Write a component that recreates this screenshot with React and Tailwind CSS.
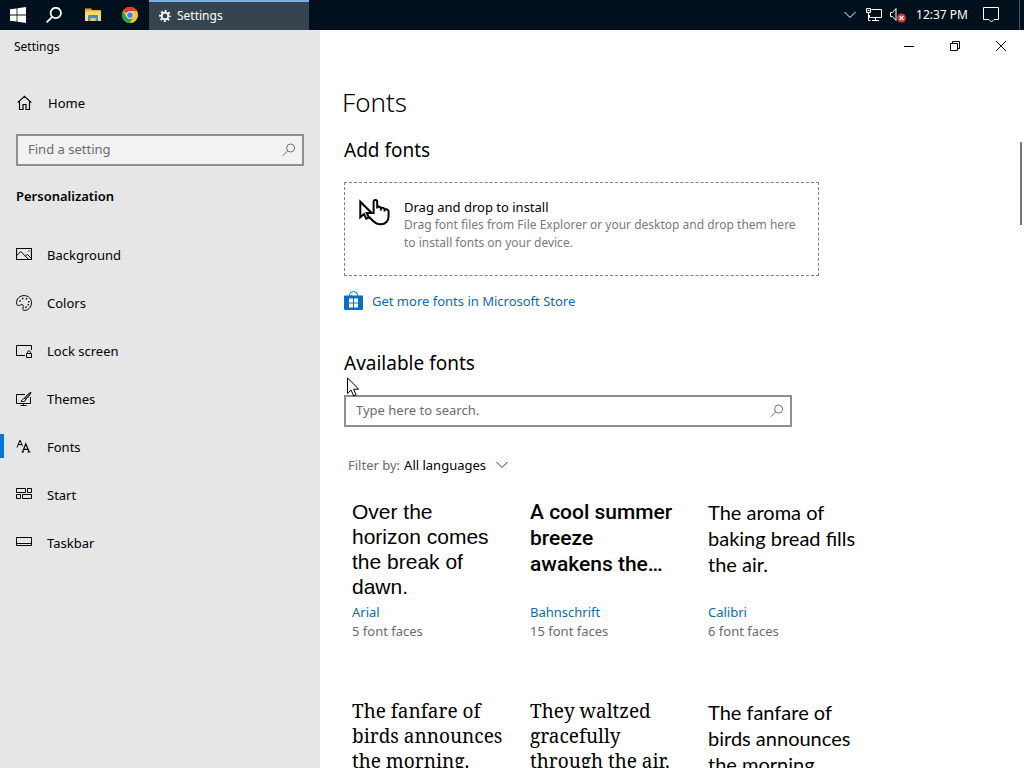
import React, { useState } from 'react';

/* Icons */
const WindowsLogo = () => (
  <svg className="h-4 w-4" viewBox="0 0 16 16" fill="#fff">
    <path d="M0 2.3 6.6 1.4V7.6H0zM7.4 1.3 16 0v7.6H7.4zM0 8.4h6.6v6.2L0 13.7zM7.4 8.4H16V16l-8.6-1.3z" />
  </svg>
);

const TaskbarSearchIcon = () => (
  <svg className="h-4 w-4" viewBox="0 0 16 16" fill="none" stroke="#fff" strokeWidth="1.8">
    <circle cx="9.8" cy="6" r="5.2" />
    <path d="M6.2 9.8.6 15.4" />
  </svg>
);

const ExplorerIcon = () => (
  <svg className="h-4 w-4" viewBox="0 0 16 16">
    <path d="M0 1.5h6l1.2 1.6H16V14H0z" fill="#e8a935" />
    <path d="M0 4.2h16V14H0z" fill="#fbd873" />
    <path d="M3 14V9.2c0-.7.5-1.2 1.2-1.2h7.6c.7 0 1.2.5 1.2 1.2V14h-2.6v-3H5.6v3z" fill="#3f8fc9" />
    <path d="M5.6 11h4.8v3H5.6z" fill="#e9c565" />
  </svg>
);

const ChromeIcon = () => (
  <svg className="h-4 w-4" viewBox="0 0 48 48">
    <circle cx="24" cy="24" r="24" fill="#fbc116" />
    <path d="M24 24 3.2 12A24 24 0 0 1 44.8 12L44.8 13H24z" fill="#e33b2e" />
    <path d="M3.2 12A24 24 0 0 0 24 48L34.4 30 13.6 30z" fill="#2ba24c" />
    <path d="M24 13h20.8A24 24 0 0 1 24 48l10.4-18z" fill="#fbc116" />
    <circle cx="24" cy="24" r="11" fill="#fff" />
    <circle cx="24" cy="24" r="8.6" fill="#3f7fee" />
  </svg>
);

const GearIcon = () => (
  <svg className="h-3 w-3" viewBox="0 0 24 24" fill="none" stroke="#fff">
    <circle cx="12" cy="12" r="6.6" strokeWidth="3.6" />
    <circle
      cx="12"
      cy="12"
      r="9.9"
      strokeWidth="4"
      strokeDasharray="3.9 3.876"
      strokeDashoffset="1.95"
    />
  </svg>
);

const ChevronDown = ({ className }) => (
  <svg className={className} viewBox="0 0 12 8" fill="none" stroke="currentColor">
    <path d="M.5 1 6 6.5 11.5 1" />
  </svg>
);

const NetworkIcon = () => (
  <svg className="h-4 w-4" viewBox="0 0 16 16" fill="none" stroke="#fff">
    <path d="M5.5 2.5h10v8h-12V8M9.5 10.5v3M6 13.5h7" />
    <path d="M.5 1.5h4v4h-4zM2.5 5.5v8h2M1.5 3.5h2" />
  </svg>
);

const MutedIcon = () => (
  <svg className="h-4 w-4" viewBox="0 0 16 16" fill="none" stroke="#fff">
    <path d="M.5 5.5h2l3.5-4v12l-3.5-4h-2z" />
    <circle cx="11.5" cy="11" r="4.5" fill="#d1343f" stroke="none" />
    <path d="m9.5 9 4 4M13.5 9l-4 4" strokeWidth="1.2" />
  </svg>
);

const NotificationIcon = () => (
  <svg className="h-4 w-4" viewBox="0 0 16 16" fill="none" stroke="#fff">
    <path d="M.5.5h15v12H11L8.5 15 6 12.5H.5z" />
  </svg>
);

const SearchIcon = () => (
  <svg className="h-3.5 w-3.5" viewBox="0 0 14 14" fill="none" stroke="#6f6f6f">
    <circle cx="8.6" cy="5" r="4" />
    <path d="M5.7 7.9.8 12.8" />
  </svg>
);

const NavIcon = ({ children }) => (
  <svg className="mb-0.5 h-4 w-4 shrink-0" viewBox="0 0 16 16" fill="none" stroke="#000">
    {children}
  </svg>
);

const HomeIcon = () => (
  <NavIcon>
    <path d="M1.6 7.6 8.5 1.3l6.9 6.3M3.5 6v8.5H7v-5h3v5h3.5V6" strokeWidth="1.2" />
  </NavIcon>
);

const navItems = [
  {
    name: 'Background',
    icon: (
      <NavIcon>
        <path d="M.5 1.5h15v11H.5z" strokeWidth="1.2" />
        <path d="m.8 8.5 4-4 8 8M9.3 9.3l2-2 4 4" />
        <path d="M12.5 4h1.2" />
      </NavIcon>
    ),
  },
  {
    name: 'Colors',
    icon: (
      <NavIcon>
        <path d="M.7 9.3C-.3 3.6 4 .5 8.2.6c4.3 0 7.3 3.2 7.3 7.2 0 4.3-3.2 7.6-6.8 7.6-1.8 0-2.2-1-1.7-2.6.5-1.7.4-3-1-3.3-1.3-.2-1.6.9-2.8 1C1.9 10.6.9 10.2.7 9.3z" />
        <path d="M3.3 6h1.4M6 3.5h1.4M9.8 3.8h1.4M12 6.8h1.4M11.6 9.8H13M9.2 12.2h1.4" strokeWidth="1.4" />
      </NavIcon>
    ),
  },
  {
    name: 'Lock screen',
    icon: (
      <NavIcon>
        <path d="M9 12.5H.5v-10h15V7" />
        <path d="M10.5 10.5h5v4h-5zM11.5 10.5V9.3c0-2 3-2 3 0v1.2" />
      </NavIcon>
    ),
  },
  {
    name: 'Themes',
    icon: (
      <NavIcon>
        <path d="M9 3.5H.5v9h14V6M7.5 12.5v2M4.5 14.5h6" />
        <path d="M15 1.3c-2.5 1.2-5 3.7-6.5 6l1.3 1.2c2-1.7 4.3-4.5 5.2-7.2z" fill="#777" />
        <path d="M8.5 7.5c-2 0-1.8 2-3.7 2.7 1.7.8 4.7.6 4.9-1.7z" />
      </NavIcon>
    ),
  },
  {
    name: 'Fonts',
    icon: (
      <NavIcon>
        <path d="M1 8.5 4 1.2l2.5 6M2.3 5.5h3.4" />
        <path d="M6.5 13 9.8 4.8 13.2 13M7.5 10.3h4.6M5.5 13H8M11.5 13h3" strokeWidth="1.2" />
      </NavIcon>
    ),
  },
  {
    name: 'Start',
    icon: (
      <NavIcon>
        <path d="M.5 1.5h9v4h-9zM11.5 1.5h4v4h-4zM.5 7.5h4v4h-4zM6.5 7.5h9v4h-9z" />
      </NavIcon>
    ),
  },
  {
    name: 'Taskbar',
    icon: (
      <NavIcon>
        <path d="M.5 2.5h15v8H.5zM.5 8.5h15" />
      </NavIcon>
    ),
  },
];

const StoreIcon = () => (
  <svg className="h-5 w-5 shrink-0" viewBox="0 0 20 20" fill="none">
    <path d="M5.5 5V4a4 3.5 0 0 1 8 0v1" stroke="#0a6fbf" />
    <path d="M7.8 5V3.6" stroke="#0a6fbf" />
    <path d="M0 4.5h19v13q0 1.5-1.5 1.5h-16Q0 19 0 17.5z" fill="#0a6fc2" />
    <path d="M5 7.5h4v4H5zM10 7.5h4v4h-4zM5 12.5h4v4H5zM10 12.5h4v4h-4z" fill="#fff" />
  </svg>
);

const DragDropIcon = () => (
  <svg className="h-8 w-8 shrink-0" viewBox="0 0 32 32" fill="none" stroke="#000" strokeWidth="2">
    <path
      d="M14.6 16V4c0-2.7 3.6-2.7 3.6 0v6.5M18.2 9.3c1-1.2 3.7-.7 3.7 1.2v2M21.9 10.3c1.2-1 3.7-.4 3.7 1.5v1.7M25.6 11.5c1.5-.8 4 0 4 2V18c0 5-3 8.3-8 8.3-3.5 0-5.5-1.3-7.5-3.3l-4-4"
      strokeLinejoin="round"
    />
    <path d="M1.3 3.7v15.6L5 16l2.3 4.7 2.6-1.2L7.7 15h5z" fill="#fff" />
  </svg>
);

const PointerIcon = () => (
  <svg className="h-5 w-3" viewBox="0 0 12 20" fill="#fff" stroke="#000">
    <path d="M.5.8v15.7l3.6-3.4L6.7 19l2.4-1.1-2.5-5.7h5z" />
  </svg>
);

const fonts = [
  {
    name: 'Arial',
    faces: 5,
    sample: 'Over the horizon comes the break of dawn.',
    style: "pr-2 font-['Liberation_Sans',sans-serif] text-[21px] leading-[25px]",
  },
  {
    name: 'Bahnschrift',
    faces: 15,
    sample: 'A cool summer breeze awakens the…',
    style: "pr-2 font-['Roboto',sans-serif] font-medium text-[21px] leading-[26px]",
  },
  {
    name: 'Calibri',
    faces: 6,
    sample: 'The aroma of baking bread fills the air.',
    style: "font-['Lato',sans-serif] text-[20px] leading-[26px]",
  },
  {
    name: 'Cambria',
    faces: 4,
    sample: 'The fanfare of birds announces the morning.',
    style: "font-['Noto_Serif','Liberation_Serif',serif] text-[19px] leading-[25px]",
  },
  {
    name: 'Cambria Math',
    faces: 1,
    sample: 'They waltzed gracefully through the air.',
    style: "font-['Noto_Serif','Liberation_Serif',serif] text-[19px] leading-[25px]",
  },
  {
    name: 'Candara',
    faces: 6,
    sample: 'The fanfare of birds announces the morning.',
    style: "font-['Lato',sans-serif] text-[20px] leading-[26px]",
  },
];

const Taskbar = () => (
  <header className="flex h-[30px] shrink-0 items-center bg-[#00101c] text-white">
    <button type="button" aria-label="Start" className="flex h-full w-9 items-center justify-center">
      <WindowsLogo />
    </button>
    <button type="button" aria-label="Search" className="flex h-full w-9 items-center justify-center">
      <TaskbarSearchIcon />
    </button>
    <button type="button" aria-label="File Explorer" className="ml-[3px] flex h-full w-9 items-center justify-center">
      <ExplorerIcon />
    </button>
    <button type="button" aria-label="Google Chrome" className="flex h-full w-[38px] items-center justify-center">
      <ChromeIcon />
    </button>
    <button
      type="button"
      className="flex h-full w-40 items-center gap-1.5 border-t-2 border-[#76b1e8] bg-[#36444f] px-2.5 text-xs"
    >
      <GearIcon />
      Settings
    </button>

    {/* System tray */}
    <div className="ml-auto flex h-full items-center">
      <button type="button" aria-label="Show hidden icons" className="mr-2.5">
        <ChevronDown className="h-2 w-3" />
      </button>
      <button type="button" aria-label="Network" className="mr-2">
        <NetworkIcon />
      </button>
      <button type="button" aria-label="Volume muted" className="mr-2.5">
        <MutedIcon />
      </button>
      <time className="mr-[15px] text-xs whitespace-nowrap">12:37 PM</time>
      <button type="button" aria-label="Notifications" className="mr-5">
        <NotificationIcon />
      </button>
      <button type="button" aria-label="Show desktop" className="h-full w-[5px] border-l border-[#4b5661]" />
    </div>
  </header>
);

const SearchBox = ({ label, placeholder, className }) => (
  <div className={`flex h-8 items-center border-2 border-[#8f8f8f] pr-1.5 pl-2.5 ${className}`}>
    <input
      type="text"
      aria-label={label}
      placeholder={placeholder}
      className="min-w-0 flex-1 bg-transparent text-[13px] outline-none placeholder:text-[#6b6b6b]"
    />
    <button type="button" aria-label="Search">
      <SearchIcon />
    </button>
  </div>
);

const Sidebar = ({ active, onSelect }) => (
  <aside className="flex w-80 shrink-0 flex-col bg-[#e6e6e6]">
    <div className="flex h-[34px] items-center px-3.5 text-xs">Settings</div>
    <a href="#home" className="mt-4 flex h-12 items-center gap-4 px-4 text-[13px]">
      <HomeIcon />
      Home
    </a>
    <SearchBox label="Find a setting" placeholder="Find a setting" className="mx-4 mt-1.5 bg-[#f2f2f2]" />
    <h2 className="mt-5 px-4 text-[13px] leading-5 font-semibold">Personalization</h2>
    <nav className="mt-[26px] flex flex-col">
      {navItems.map((item) => (
        <a
          key={item.name}
          href={`#${item.name.toLowerCase().replace(' ', '-')}`}
          onClick={() => onSelect(item.name)}
          className="flex h-12 items-center text-[13px]"
        >
          <span className={`mb-1 h-6 w-1 ${item.name === active ? 'bg-[#0078d7]' : ''}`} />
          <span className="ml-3 flex items-center gap-[15px]">
            {item.icon}
            {item.name}
          </span>
        </a>
      ))}
    </nav>
  </aside>
);

const WindowControls = () => (
  <div className="flex h-8 shrink-0 justify-end">
    <button type="button" aria-label="Minimize" className="flex w-[46px] items-center justify-center">
      <svg className="h-2.5 w-2.5" viewBox="0 0 10 10" stroke="#000">
        <path d="M0 5.5h10" />
      </svg>
    </button>
    <button type="button" aria-label="Restore" className="flex w-[46px] items-center justify-center">
      <svg className="h-2.5 w-2.5" viewBox="0 0 10 10" fill="none" stroke="#000">
        <path d="M.5 2.5h7v7h-7zM2.5 2.5v-2h7v7h-2" />
      </svg>
    </button>
    <button type="button" aria-label="Close" className="flex w-[46px] items-center justify-center">
      <svg className="h-2.5 w-2.5" viewBox="0 0 10 10" stroke="#000">
        <path d="m0 0 10 10M10 0 0 10" />
      </svg>
    </button>
  </div>
);

const FontCard = ({ font }) => (
  <li className="h-[200px]">
    <p className={`h-[103px] ${font.style}`}>{font.sample}</p>
    <a href="#font" className="block text-[13px] leading-5 text-[#0a6cb5]">{font.name}</a>
    <p className="text-[13px] leading-[18px] text-[#6b6b6b]">{font.faces} font faces</p>
  </li>
);

const App = () => {
  const [active, setActive] = useState('Fonts');

  return (
    <div className="flex h-screen flex-col overflow-hidden bg-white font-['Noto_Sans',sans-serif] text-black">
      <Taskbar />
      <div className="flex min-h-0 flex-1">
        <Sidebar active={active} onSelect={setActive} />

        <main className="relative flex min-w-0 flex-1 flex-col">
          <WindowControls />
          <div className="min-h-0 flex-1 overflow-y-auto px-6 [scrollbar-width:none]">
            <h1 className="mt-5 -ml-0.5 text-[26px] leading-10 font-light">Fonts</h1>

            {/* Add fonts */}
            <h2 className="mt-3.5 text-[19px] leading-7">Add fonts</h2>
            <div className="mt-[18px] flex h-[94px] max-w-[475px] gap-[13px] border border-dashed border-[#808080] px-3.5 pt-[15px]">
              <DragDropIcon />
              <div className="text-[13px] leading-[18px]">
                <p>Drag and drop to install</p>
                <p className="text-xs leading-[18px] text-[#7a7a7a]">
                  Drag font files from File Explorer or your desktop and drop them here to install fonts on your device.
                </p>
              </div>
            </div>
            <a href="#store" className="mt-[15px] flex items-center gap-2 text-[13px] leading-5 text-[#0a6cb5]">
              <StoreIcon />
              Get more fonts in Microsoft Store
            </a>

            {/* Available fonts */}
            <h2 className="mt-[38px] text-[19px] leading-7">Available fonts</h2>
            <SearchBox
              label="Search fonts"
              placeholder="Type here to search."
              className="mt-[18px] max-w-[448px] bg-white"
            />
            <div className="mt-7 flex items-center px-1 text-[13px] leading-5">
              <label htmlFor="language" className="mr-1 text-[#6b6b6b]">Filter by:</label>
              <select id="language" className="appearance-none bg-transparent outline-none">
                <option>All languages</option>
              </select>
              <ChevronDown className="ml-2.5 h-2 w-3 text-[#333]" />
            </div>
            <ul className="mt-6 ml-2 grid max-w-[520px] grid-cols-[repeat(auto-fill,156px)] gap-x-[22px]">
              {fonts.map((font) => (
                <FontCard key={font.name} font={font} />
              ))}
            </ul>
          </div>

          {/* Scroll thumb */}
          <div className="absolute top-28 right-0.5 h-[83px] w-0.5 bg-[#767676]" />
          {/* Mouse pointer */}
          <div className="pointer-events-none absolute top-[347px] left-[27px]">
            <PointerIcon />
          </div>
        </main>
      </div>
    </div>
  );
};

export default App;
